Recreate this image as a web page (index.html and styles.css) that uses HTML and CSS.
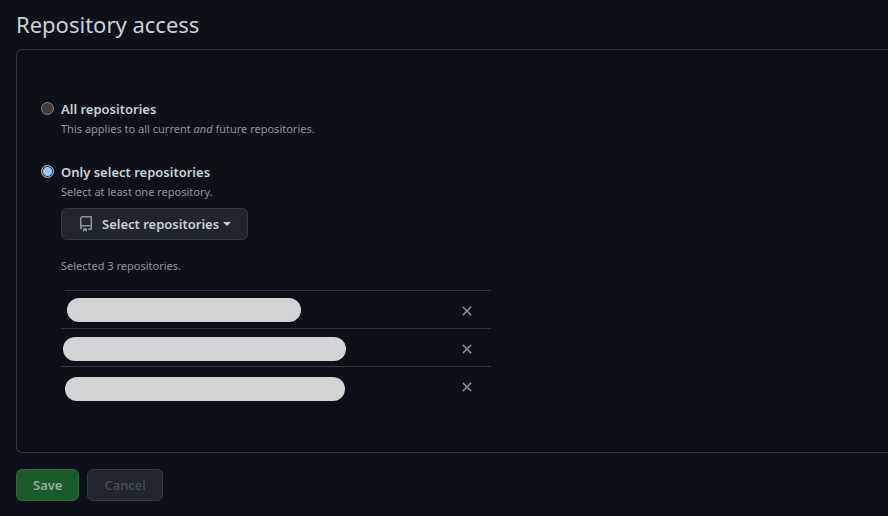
FILE: index.html
```html
<!DOCTYPE html>
<html lang="en">

<head>
	<meta charset="utf-8">
	<title>Repository access</title>
	<link rel="stylesheet" href="styles.css">
</head>

<body>
	<form class="access">
		<h2 class="heading">Repository access</h2>
		<div class="box">
			<div class="option">
				<input type="radio" name="target" id="all" value="all">
				<div class="option-body">
					<label for="all">All repositories</label>
					<p class="note">This applies to all current <em>and</em> future repositories.</p>
				</div>
			</div>
			<div class="option">
				<input type="radio" name="target" id="selected" value="selected" checked>
				<div class="option-body">
					<label for="selected">Only select repositories</label>
					<p class="note">Select at least one repository.</p>
					<button type="button" class="button select-button">
						<svg class="repo-icon" width="16" height="16" viewBox="0 0 16 16">
							<path d="M2 2.5A2.5 2.5 0 014.500 0h8.750a.75.75 0 01.75.75v12.500a.75.75 0 01-.75.75h-2.500a.75.75 0 110-1.500h1.750v-2h-8a1 1 0 00-.714 1.700.75.75 0 01-1.072 1.050A2.495 2.495 0 012 11.500v-9zm10.500-1h-8a1 1 0 00-1 1v6.708A2.486 2.486 0 014.500 9h8V1.500zM5 12.250v3.250a.25.25 0 00.4.2l1.450-1.087a.25.25 0 01.3 0L8.600 15.700a.25.25 0 00.4-.2v-3.250H5z" />
						</svg>
						<span>Select repositories</span>
						<span class="caret"></span>
					</button>
					<p class="note count">Selected 3 repositories.</p>
					<ul class="repos">
						<li>
							<span class="repo-name first"></span>
							<button type="button" class="remove" aria-label="Remove repository">
								<svg width="16" height="16" viewBox="0 0 16 16"><path d="M3.720 3.720a.75.75 0 011.060 0L8 6.940l3.220-3.220a.75.75 0 111.060 1.060L9.060 8l3.220 3.220a.75.75 0 11-1.060 1.060L8 9.060l-3.220 3.220a.75.75 0 01-1.060-1.060L6.940 8 3.720 4.780a.75.75 0 010-1.060z" /></svg>
							</button>
						</li>
						<li>
							<span class="repo-name second"></span>
							<button type="button" class="remove" aria-label="Remove repository">
								<svg width="16" height="16" viewBox="0 0 16 16"><path d="M3.720 3.720a.75.75 0 011.060 0L8 6.940l3.220-3.220a.75.75 0 111.060 1.060L9.060 8l3.220 3.220a.75.75 0 11-1.060 1.060L8 9.060l-3.220 3.220a.75.75 0 01-1.060-1.060L6.940 8 3.720 4.780a.75.75 0 010-1.060z" /></svg>
							</button>
						</li>
						<li>
							<span class="repo-name third"></span>
							<button type="button" class="remove" aria-label="Remove repository">
								<svg width="16" height="16" viewBox="0 0 16 16"><path d="M3.720 3.720a.75.75 0 011.060 0L8 6.940l3.220-3.220a.75.75 0 111.060 1.060L9.060 8l3.220 3.220a.75.75 0 11-1.060 1.060L8 9.060l-3.220 3.220a.75.75 0 01-1.060-1.060L6.940 8 3.720 4.780a.75.75 0 010-1.060z" /></svg>
							</button>
						</li>
					</ul>
				</div>
			</div>
		</div>
		<div class="actions">
			<button type="submit" class="button save" disabled>Save</button>
			<button type="button" class="button cancel" disabled>Cancel</button>
		</div>
	</form>
</body>

</html>
```
FILE: styles.css
```css
* {
	box-sizing: border-box;
}

body {
	margin: 0;
	font: 13px/20px "Segoe UI", "Noto Sans", sans-serif;
	color: #c9d1d9;
	background-color: #0d1117;
}

.access {
	padding: 8px 0 12px 16px;
}

.heading {
	margin: 0 0 8px;
	font-size: 22px;
	font-weight: 400;
	line-height: 33px;
}

/* open on the right, the box runs to the window edge */
.box {
	padding: 49px 24px 48px;
	border: 1px solid #30363d;
	border-right: 0;
	border-radius: 6px 0 0 6px;
}

.option {
	display: flex;
	gap: 7px;
}

.option + .option {
	margin-top: 24px;
}

.option input {
	flex: none;
	appearance: none;
	width: 13px;
	height: 13px;
	margin: 3px 0 0;
	border: 1px solid #858585;
	border-radius: 50%;
	background-color: #3b3b3b;
}

.option input:checked {
	border-color: #99c8ff;
	background: radial-gradient(circle, #99c8ff 4px, #3b3b3b 5px);
}

.option-body {
	flex: 1;
}

label {
	display: block;
	font-weight: 600;
}

.note {
	margin: 0;
	font-size: 11px;
	line-height: 19px;
	color: #8b949e;
}

.count {
	margin-top: 16px;
}

.button {
	height: 32px;
	padding: 0 16px;
	font: inherit;
	font-weight: 600;
	color: #c9d1d9;
	border: 1px solid #363b42;
	border-radius: 6px;
	background-color: #21262d;
}

.select-button {
	display: flex;
	align-items: center;
	margin-top: 7px;
}

.repo-icon {
	margin-right: 8px;
	fill: #8b949e;
}

.caret {
	margin-left: 4px;
	border: 4px solid transparent;
	border-top-color: #c9d1d9;
	border-bottom: 0;
}

.repos {
	max-width: 430px;
	margin: 15px 0 0;
	padding: 0;
	list-style: none;
}

.repos li {
	display: flex;
	align-items: center;
	justify-content: space-between;
	height: 38px;
	padding: 3px 16px 0 2px;
	border-top: 1px solid #30363d;
}

.repos li:first-child {
	margin-left: 4px;
}

.repo-name {
	height: 24px;
	border-radius: 12px;
	background-color: #d3d4d5;
}

.first {
	width: 234px;
	margin-bottom: 2px;
}

.second {
	width: 283px;
}

.third {
	width: 280px;
	margin-top: 4px;
	margin-left: 2px;
}

.remove {
	display: flex;
	padding: 0;
	border: 0;
	background: none;
	fill: #8b949e;
}

.actions {
	display: flex;
	gap: 8px;
	margin-top: 16px;
}

.save {
	color: #94af9c;
	border-color: #2b6a38;
	background-color: #1b5a29;
}

.cancel {
	font-weight: 500;
	color: #484f58;
}
```
